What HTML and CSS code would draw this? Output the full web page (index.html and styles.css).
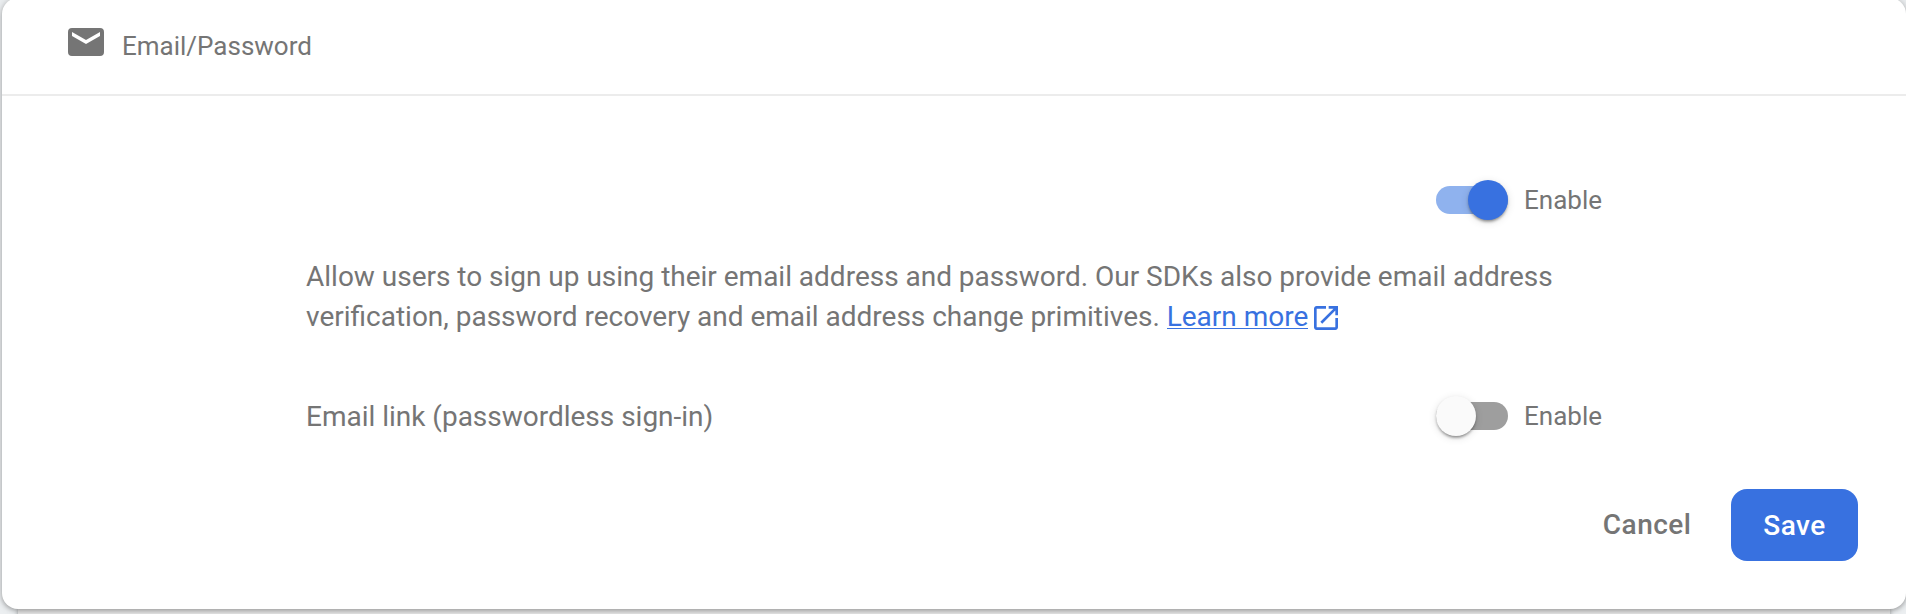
FILE: index.html
```html
<!DOCTYPE html>
<html lang="en">
<head>
<meta charset="utf-8">
<title>Email/Password</title>
<link rel="stylesheet" href="styles.css">
</head>
<body>
<div class="page">
<main class="card">
  <header class="card-header">
    <svg class="mail-icon" viewBox="0 0 36 28"><path fill="#757575" fill-rule="evenodd" d="M4 0H32Q36 0 36 4V24Q36 28 32 28H4Q0 28 0 24V4Q0 0 4 0ZM4 4V8L18 16L32 8V4L18 12Z"/></svg>
    <span class="provider">Email/Password</span>
  </header>
  <section class="content">
    <div class="row row-first">
      <div class="toggle-field">
        <span class="toggle on"><span class="thumb"></span></span>
        <span class="toggle-label">Enable</span>
      </div>
    </div>
    <p class="description">Allow users to sign up using their email address and password. Our SDKs also provide email address<br>verification, password recovery and email address change primitives. <a class="link" href="#">Learn more</a><svg class="open-icon" viewBox="3 3 18 18"><path fill="currentColor" d="M19 19H5V5h7V3H5c-1.110 0-2 .9-2 2v14c0 1.100.89 2 2 2h14c1.100 0 2-.9 2-2v-7h-2v7zM14 3v2h3.590l-9.830 9.830 1.410 1.410L19 6.410V10h2V3h-7z"/></svg></p>
    <div class="row row-second">
      <span class="option">Email link (passwordless sign-in)</span>
      <div class="toggle-field">
        <span class="toggle"><span class="thumb"></span></span>
        <span class="toggle-label">Enable</span>
      </div>
    </div>
  </section>
  <footer class="actions">
    <button class="btn cancel">Cancel</button>
    <button class="btn save">Save</button>
  </footer>
</main>
<div class="under"></div>
</div>
</body>
</html>
```
FILE: styles.css
```css
* { box-sizing: border-box; }
body {
  margin: 0;
  height: 614px;
  overflow: hidden;
  background: #eceff1;
  font-family: Roboto, sans-serif;
  color: #757575;
}
.page {
  display: flex;
  flex-direction: column;
  height: 614px;
  padding-left: 2px;
  overflow: hidden;
}
.card {
  position: relative;
  z-index: 1;
  flex: none;
  height: 611px;
  margin-top: -2px;
  background: #fff;
  border-radius: 16px;
  box-shadow: 0 2px 4px rgba(0,0,0,.24), 0 0 10px rgba(0,0,0,.16);
}
.under {
  flex: none;
  height: 20px;
  margin: 0 16px;
  background: #e8e8e8;
  box-shadow: 0 0 4px rgba(0,0,0,.35);
}
.card-header {
  display: flex;
  height: 98px;
  padding: 30px 0 0 66px;
  border-bottom: 2px solid #ececec;
}
.mail-icon { width: 36px; height: 28px; }
.provider { margin: 2px 0 0 18px; font-size: 26px; line-height: 32px; }
.content { width: 1296px; margin-left: 304px; }
.row { display: flex; align-items: center; justify-content: space-between; height: 40px; }
.row-first { justify-content: flex-end; margin-top: 84px; }
.row-second { margin-top: 59px; }
.toggle-field { display: flex; align-items: center; width: 166px; }
.toggle {
  display: flex;
  align-items: center;
  width: 72px;
  height: 28px;
  border-radius: 14px;
  background: #9e9e9e;
}
.thumb {
  flex: none;
  width: 40px;
  height: 40px;
  border-radius: 50%;
  background: #fafafa;
  box-shadow: 0 3px 3px -2px rgba(0,0,0,.3), 0 2px 3px rgba(0,0,0,.2), 0 2px 8px rgba(0,0,0,.12);
}
.toggle.on { justify-content: flex-end; background: #8fb2ee; }
.toggle.on .thumb { background: #3871e0; }
.toggle-label { margin-left: 16px; font-size: 26px; line-height: 36px; }
.description {
  margin: 37px 0 0;
  font-size: 28px;
  line-height: 40px;
  word-spacing: -.075px;
  white-space: nowrap;
}
.link {
  color: #3871e0;
  text-decoration: none;
  background: linear-gradient(#3871e0, #3871e0) 0 calc(100% - 4px) / 100% 1px no-repeat;
}
.open-icon { width: 24px; height: 24px; margin-left: 6px; color: #3871e0; vertical-align: -4px; }
.option { padding-top: 2px; font-size: 28px; line-height: 40px; letter-spacing: -.012px; }
.actions { display: flex; justify-content: flex-end; padding: 53px 48px 0 0; }
.btn {
  height: 72px;
  padding: 0;
  border: 0;
  border-radius: 16px;
  background: transparent;
  color: #757575;
  font: 500 28px/36px Roboto, sans-serif;
  letter-spacing: .5px;
}
.cancel { margin-right: 39.5px; }
.save { width: 127px; padding-top: 2px; background: #3871e0; color: #fff; }
```
